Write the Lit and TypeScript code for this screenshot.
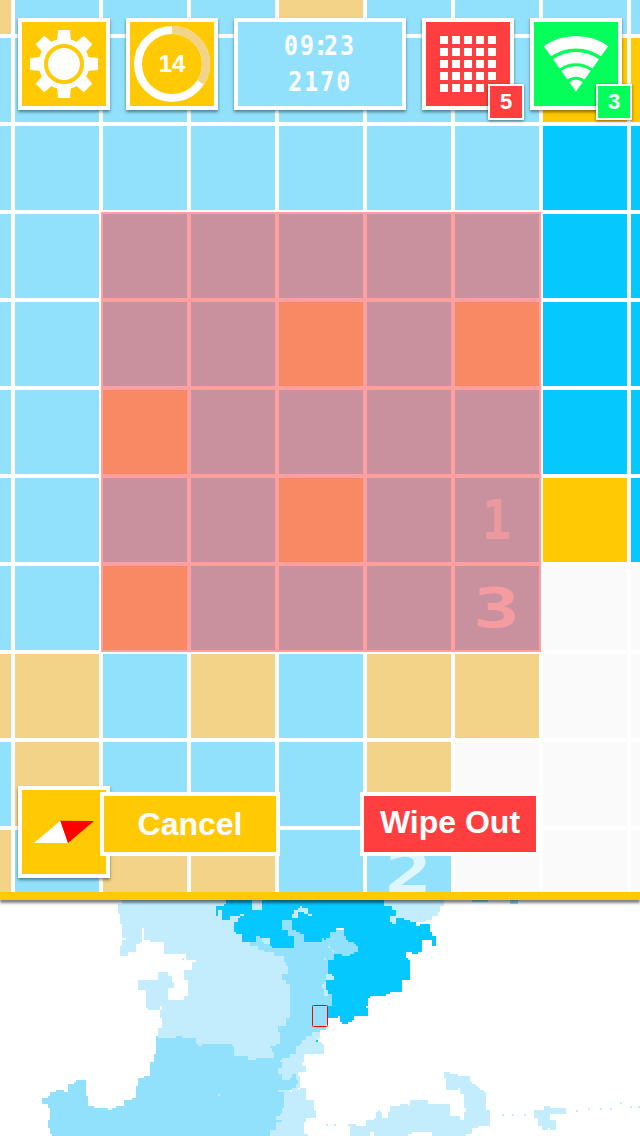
import { LitElement, html, svg, css } from "lit";
import { customElement } from "lit/decorators.js";

// Terrain codes: B shallow water, T sand, Y gold, C deep water, W empty
const ROWS = [
  "TBBBTBBBB",
  "BBBBBBBYY",
  "BBBBBBBCC",
  "BBBBBBBCC",
  "BBBBTBTCC",
  "BBTBBBBCC",
  "BBBBTBBYC",
  "BBTBBBBWW",
  "TTBTBTTWW",
  "BTBBBTWWW",
  "TBTTBBWWW",
];
const NUMBERS: Record<string, string> = { "6,6": "1", "7,6": "3", "10,5": "2" };

// Turns a coarse outline into a staircase outline on the map's 6-unit pixels.
function outline(list: string): string {
  const pts = list.trim().split(/\s+/).map((p) => p.split(",").map(Number));
  const snap = (n: number) => Math.round(n / 6) * 6;
  let [x, y] = pts[0].map(snap);
  let d = `M${x} ${y}`;
  for (const p of pts.slice(1)) {
    const tx = snap(p[0]);
    const ty = snap(p[1]);
    const n = Math.max(1, Math.min(Math.abs(tx - x), Math.abs(ty - y)) / 6);
    const x0 = x;
    const y0 = y;
    for (let i = 1; i <= n; i++) {
      x = snap(x0 + ((tx - x0) * i) / n);
      y = snap(y0 + ((ty - y0) * i) / n);
      d += `H${x}V${y}`;
    }
    x = tx;
    y = ty;
    d += `H${x}V${y}`;
  }
  return d + "Z";
}

const PALE = [
  `366,30 366,42 354,42 354,72 360,72 360,102 366,102 366,144 378,144 378,150 372,150 366,168 360,168 360,198 384,198 384,186 408,180 408,162
   426,150 426,114 432,114 432,150 450,150 450,156 492,156 492,192 540,192 558,198 558,210 588,210 588,216 576,216 576,240 552,240
   552,270 564,270 564,318 552,318 552,330 510,330 504,324 504,294 522,294 522,276 516,276 516,258 504,258 504,246 474,246
   474,270 414,270 414,300 438,300 438,354 444,354 444,360 480,360 480,348 486,348 486,360 480,360 480,384 486,384 486,414
   474,414 474,450 600,480 700,516 846,516 960,420 978,420 978,30`,
  `936,432 954,426 960,426 960,444 954,444 954,456 966,456 966,462 972,462 972,492 912,492 912,498 912,516 906,516 906,528 918,528 918,546 894,546 894,558 900,558 900,594 918,600
   918,630 942,630 942,660 948,660 948,684 918,684 918,696 912,696 912,732 924,732 924,738 804,738 804,498`,
  `1140,30 1332,30 1332,48 1320,48 1320,66 1314,66 1314,78 1302,78 1296,90 1278,90 1278,96 1188,96 1188,102 1140,102`,
  `1050,738 1050,708 1044,708 1044,702 1068,702 1068,708 1098,708 1098,690 1122,690 1122,684 1128,684 1128,666 1134,666 1134,660 1140,660 1140,666 1146,666 1146,684 1164,684 1164,666 1170,666
   1170,648 1200,648 1200,642 1224,642 1224,648 1230,648 1230,630 1284,630 1284,642 1350,642 1350,678 1368,678 1380,684 1380,690 1386,690
   1392,684 1392,666 1398,666 1398,654 1392,654 1392,612 1386,612 1380,594 1374,594 1374,600 1338,600 1338,564 1332,564 1332,546 1350,546 1350,552
   1374,552 1374,558 1404,558 1410,576 1440,600 1458,612 1458,660 1470,660 1470,678 1470,708 1434,708 1434,714 1416,720 1416,732 1398,732 1398,738
   1296,738 1296,726 1236,726 1236,732 1224,738 1122,738 1122,726 1110,726 1110,738`,
  `1602,660 1632,660 1632,648 1650,648 1650,654 1698,654 1698,672 1650,672 1650,690 1668,690 1668,720 1650,720 1650,714
   1644,714 1644,720 1626,720 1626,708 1614,708 1614,684 1602,684`,
].map(outline);

const SHALLOW = [
  `468,438 474,438 474,444 528,444 528,438 546,438 546,444 588,444 588,462 594,462 594,468 606,468 606,462 696,462 696,468
   702,468 702,498 744,498 744,510 768,510 768,504 822,504 822,486 816,486 816,474 810,474 810,468 828,462 834,462 840,456 840,426 834,426 834,408
   858,408 858,384 870,384 870,282 858,282 858,270 846,270 846,252 858,252 864,246 864,228 858,228 858,216 852,216 852,198 822,198 822,186 792,186 792,180
   774,180 774,168 750,168 750,156 726,156 726,130 840,130 846,120 990,120 1092,120 1092,200 996,318 996,348 984,348 984,402 978,402
   978,420 960,420 960,426 942,426 936,438 918,438 918,450 906,450 906,462 888,474 888,492 870,492 870,504 846,504 846,510 840,510 840,516 846,516 846,534 834,540
   834,552 846,552 846,570 870,570 870,564 876,564 876,552 888,552 888,570 894,570 894,582 888,582 888,594 876,594 876,600 834,600 834,606 852,606 852,654
   846,654 846,672 840,678 828,672 828,690 846,690 846,696 828,696 828,720 810,720 810,738 156,738 156,732 150,732 150,714 144,714 144,690 150,684 150,654 144,654 144,642 126,642
   126,624 144,624 144,618 150,618 150,606 168,606 168,600 192,600 192,606 204,606 204,582 222,582 222,576 228,576 228,570 258,570
   258,618 264,618 264,648 282,648 282,654 324,654 324,660 336,660 336,654 348,654 348,648 372,648 372,630 396,630 396,624 408,624
   408,588 414,588 414,564 432,564 432,558 450,558 450,516 462,516 462,492 468,492`,
].map(outline);

const DEEP = [
  `678,30 678,42 672,42 672,48 648,48 648,78 654,78 654,60 666,60 666,90 690,90 690,78 720,78 720,72 732,72 732,78 720,78 720,84 714,84 714,96 702,96 702,126
   708,126 708,132 726,132 726,156 768,156 768,138 780,138 780,144 810,144 810,168 816,168 816,174 882,174 882,132 912,132 912,156
   966,156 966,144 972,144 972,150 978,150 978,144 990,144 990,126 1008,126 1008,114 1032,114 1032,138 1038,138 1038,150 1044,150 1044,156 1062,156 1062,162
   1068,162 1068,168 1074,168 1074,186 1062,186 1062,192 1050,192 1050,198 1026,198 1026,192 1002,192 1002,210 984,210 984,270 978,270 978,300
   984,300 984,312 996,312 996,348 984,348 984,384 1014,384 1014,378 1020,378 1020,396 1026,396 1026,402 1044,402 1044,396 1056,390
   1062,378 1104,378 1104,354 1098,354 1098,348 1104,348 1104,324 1110,324 1110,318 1158,318 1158,312 1170,312 1170,306 1206,306
   1206,270 1230,270 1230,210 1224,210 1224,204 1218,204 1218,186 1236,186 1236,192 1254,192 1254,186 1266,186 1266,150 1296,150
   1296,168 1308,168 1308,138 1296,138 1296,126 1290,126 1290,102 1260,102 1260,108 1248,108 1248,96 1230,96 1230,90 1212,90 1212,84 1188,84 1188,102
   1176,102 1176,96 1170,96 1170,78 1176,78 1188,78 1188,60 1176,60 1176,48 1164,48 1152,48 1152,30`,
].map(outline);

const SQUIGGLE = outline(
  `876,84 876,72 882,72 882,60 894,60 894,54 900,54 900,48 906,48 906,54 924,54 924,72 936,72 936,78 924,78 924,72 912,72 912,66 894,66 894,84`
);
const LAGOON = outline(
  `846,90 876,90 876,120 882,120 888,120 888,126 900,126 900,132 912,132 912,138 882,138 864,138 864,120 846,120`
);
const PALE_BITS = [
  [756, 30, 30, 30], [786, 144, 24, 12], [792, 156, 18, 6], [978, 252, 18, 18], [990, 258, 12, 12],
  [966, 282, 12, 12], [972, 276, 6, 42], [978, 300, 6, 18], [984, 168, 6, 6], [996, 180, 6, 6],
  [972, 204, 6, 6], [654, 612, 6, 6], [978, 702, 6, 6], [1002, 702, 6, 6],
  [1506, 672, 6, 6], [1536, 672, 6, 6], [1572, 672, 6, 6], [1728, 660, 6, 6], [1764, 654, 6, 6],
  [1800, 654, 6, 6], [1830, 654, 6, 6], [1860, 636, 6, 6], [1890, 648, 6, 6], [1914, 648, 6, 6],
  [546, 204, 6, 6],
];
const SHALLOW_BITS = [[1416, 30, 48, 6], [1530, 30, 24, 12]];

const rects = (list: number[][]) =>
  list.map(([x, y, w, h]) => svg`<rect x=${x} y=${y} width=${w} height=${h}></rect>`);
const paths = (list: string[]) => list.map((d) => svg`<path d=${d}></path>`);

@customElement("world-map")
class WorldMap extends LitElement {
  static styles = css`
    :host { display: block; height: 236px; background: #fff; }
    svg { display: block; shape-rendering: crispEdges; }
    .pale { fill: #c3edfd; }
    .shallow { fill: #92e1fc; }
    .deep { fill: #04c8ff; }
    .white { fill: #fff; }
    .view { fill: none; stroke: #f00; stroke-width: 3; shape-rendering: auto; }
  `;
  render() {
    return html`<svg width="640" height="236" viewBox="0 30 1920 708">
      <g class="pale">${paths(PALE)}</g>
      <g class="shallow">${paths(SHALLOW)}${rects(SHALLOW_BITS)}</g>
      <g class="deep">${paths(DEEP)}<rect x="948" y="450" width="6" height="6"></rect></g>
      <path class="shallow" d=${LAGOON}></path>
      <g class="pale"><path d=${SQUIGGLE}></path>${rects(PALE_BITS)}</g>
      <g class="white">${rects([[870, 600, 6, 6], [894, 594, 6, 6]])}</g>
      <rect class="view" x="937.5" y="346.5" width="45" height="63" rx="3"></rect>
    </svg>`;
  }
}

@customElement("tile-board")
class TileBoard extends LitElement {
  static styles = css`
    :host { display: block; height: 892px; overflow: hidden; background: #fff; }
    .grid {
      display: grid;
      grid-template-columns: repeat(9, 84px);
      grid-auto-rows: 84px;
      gap: 4px;
      margin: -50px 0 0 -73px;
    }
    .tile { display: flex; align-items: center; justify-content: center; }
    .B { background: #92e1fc; }
    .T { background: #f2d388; }
    .Y { background: #ffc903; }
    .C { background: #04c8ff; }
    .W { background: #fafafa; }
    .num {
      font: bold 55px/84px "DejaVu Sans Mono", monospace;
      color: rgba(255, 255, 255, 0.7);
      transform: scaleX(1.42);
    }
    .n1 { transform: scaleX(0.9); color: rgba(255, 255, 255, 0.62); }
    .n3 { color: rgba(255, 255, 255, 0.8); }
    .selection {
      position: absolute;
      left: 101px;
      top: 212px;
      width: 440px;
      height: 440px;
      box-sizing: border-box;
      background: rgba(255, 63, 63, 0.5);
    }
  `;
  render() {
    return html`<div class="grid">
        ${ROWS.map((row, r) =>
          [...row].map((t, c) => {
            const n = NUMBERS[`${r},${c}`];
            return html`<div class="tile ${t}">${n ? html`<span class="num n${n}">${n}</span>` : ""}</div>`;
          })
        )}
      </div>
      <div class="selection"></div>`;
  }
}

const TEETH = [0, 45, 90, 135, 180, 225, 270, 315];

// Annular wedge around the apex near (42,70), opening 35 degrees to each side.
function wedge(inner: number, outer: number): string {
  const s = Math.sin((35.2 * Math.PI) / 180);
  const c = Math.cos((35.2 * Math.PI) / 180);
  const pt = (r: number, k: number) => `${42 + k * r * s} ${69.7 - r * c}`;
  return `M${pt(outer, -1)}A${outer} ${outer} 0 0 1 ${pt(outer, 1)}L${pt(inner, 1)}A${inner} ${inner} 0 0 0 ${pt(inner, -1)}Z`;
}

@customElement("app-root")
class AppRoot extends LitElement {
  static styles = css`
    :host {
      display: block;
      position: relative;
      width: 640px;
      height: 1136px;
      overflow: hidden;
      font-family: "Liberation Sans", Arial, sans-serif;
      font-weight: bold;
      color: #fff;
    }
    .screen { display: flex; flex-direction: column; }
    .divider {
      height: 8px;
      background: #ffc903;
      box-shadow: 0 3px 3px rgba(0, 0, 0, 0.5);
      z-index: 1;
    }
    .hud {
      position: absolute;
      top: 18px;
      left: 18px;
      display: flex;
      gap: 16px;
    }
    .box {
      position: relative;
      box-sizing: border-box;
      width: 92px;
      height: 92px;
      border: 4px solid #fff;
      box-shadow: 0 2px 3px rgba(0, 0, 0, 0.45);
    }
    .box svg { display: block; }
    .gold { background: #ffc903; }
    .red { background: #ff3f3f; }
    .green { background: #04ff5a; }
    .clock {
      width: 172px;
      background: #92e1fc;
      display: flex;
      flex-direction: column;
      align-items: center;
      padding-top: 6px;
      font: bold 27px/36px "DejaVu Sans Mono", monospace;
      letter-spacing: 2.4px;
    }
    .clock div { transform: scaleX(0.86); white-space: nowrap; }
    .colon { font-family: "DejaVu Sans", sans-serif; letter-spacing: -1.4px; }
    .count {
      position: absolute;
      inset: 0;
      text-align: center;
      font-size: 24px;
      line-height: 83px;
    }
    .badge {
      position: absolute;
      left: 62px;
      top: 62px;
      width: 32px;
      height: 32px;
      border: 2px solid #fff;
      box-shadow: 0 1px 3px rgba(0, 0, 0, 0.5);
      text-align: center;
      font-size: 22px;
      line-height: 31px;
    }
    .compass { position: absolute; left: 18px; top: 786px; }
    .actions {
      position: absolute;
      left: 100px;
      top: 792px;
      display: flex;
      gap: 80px;
    }
    .action {
      box-sizing: border-box;
      width: 180px;
      height: 64px;
      border: 4px solid #fff;
      text-align: center;
      font-size: 32px;
      line-height: 56px;
      white-space: nowrap;
    }
    .wipe { line-height: 52px; }
  `;
  render() {
    return html`
      <div class="screen">
        <tile-board></tile-board>
        <div class="divider"></div>
        <world-map></world-map>
      </div>
      <div class="hud">
        <div class="box gold">
          <svg width="84" height="84" viewBox="-42 -42 84 84" fill="#fff">
            ${TEETH.map((a) => svg`<path d="M-7 -22L-6 -34H6L7 -22Z" transform="rotate(${a})"></path>`)}
            <circle r="25.5"></circle>
            <circle r="18" fill="none" stroke="#ffc903" stroke-width="4"></circle>
          </svg>
        </div>
        <div class="box gold">
          <svg width="84" height="84" viewBox="-42 -42 84 84" fill="none" stroke-width="8">
            <circle r="34" stroke="#fff"></circle>
            <path d="M0 -34A34 34 0 0 1 28.5 18.5" stroke="#f2d388"></path>
          </svg>
          <div class="count">14</div>
        </div>
        <div class="box clock">
          <div>09<span class="colon">:</span>23</div>
          <div>2170</div>
        </div>
        <div class="box red">
          <svg width="84" height="84" viewBox="0 0 84 84" fill="#fff">
            ${[0, 1, 2, 3, 4].map((r) =>
              [0, 1, 2, 3, 4].map((c) => svg`<rect x=${14 + c * 12} y=${14 + r * 12} width="8" height="8"></rect>`)
            )}
          </svg>
          <div class="badge red">5</div>
        </div>
        <div class="box green">
          <svg width="84" height="84" viewBox="0 0 84 84" fill="#fff">
            <path d=${wedge(43.3, 55.7)}></path>
            <path d=${wedge(28.5, 39.8)}></path>
            <path d=${wedge(15, 25.5)}></path>
            <path d=${wedge(0.1, 11.6)}></path>
          </svg>
          <div class="badge green">3</div>
        </div>
      </div>
      <div class="box gold compass">
        <svg width="84" height="84" viewBox="22 790 84 84">
          <path fill="#fff" d="M34 843L60.3 820.7L68 843Z"></path>
          <path fill="#f00" d="M60.3 820.7L94 821L68 843Z"></path>
        </svg>
      </div>
      <div class="actions">
        <div class="action gold">Cancel</div>
        <div class="action red wipe">Wipe Out</div>
      </div>
    `;
  }
}
